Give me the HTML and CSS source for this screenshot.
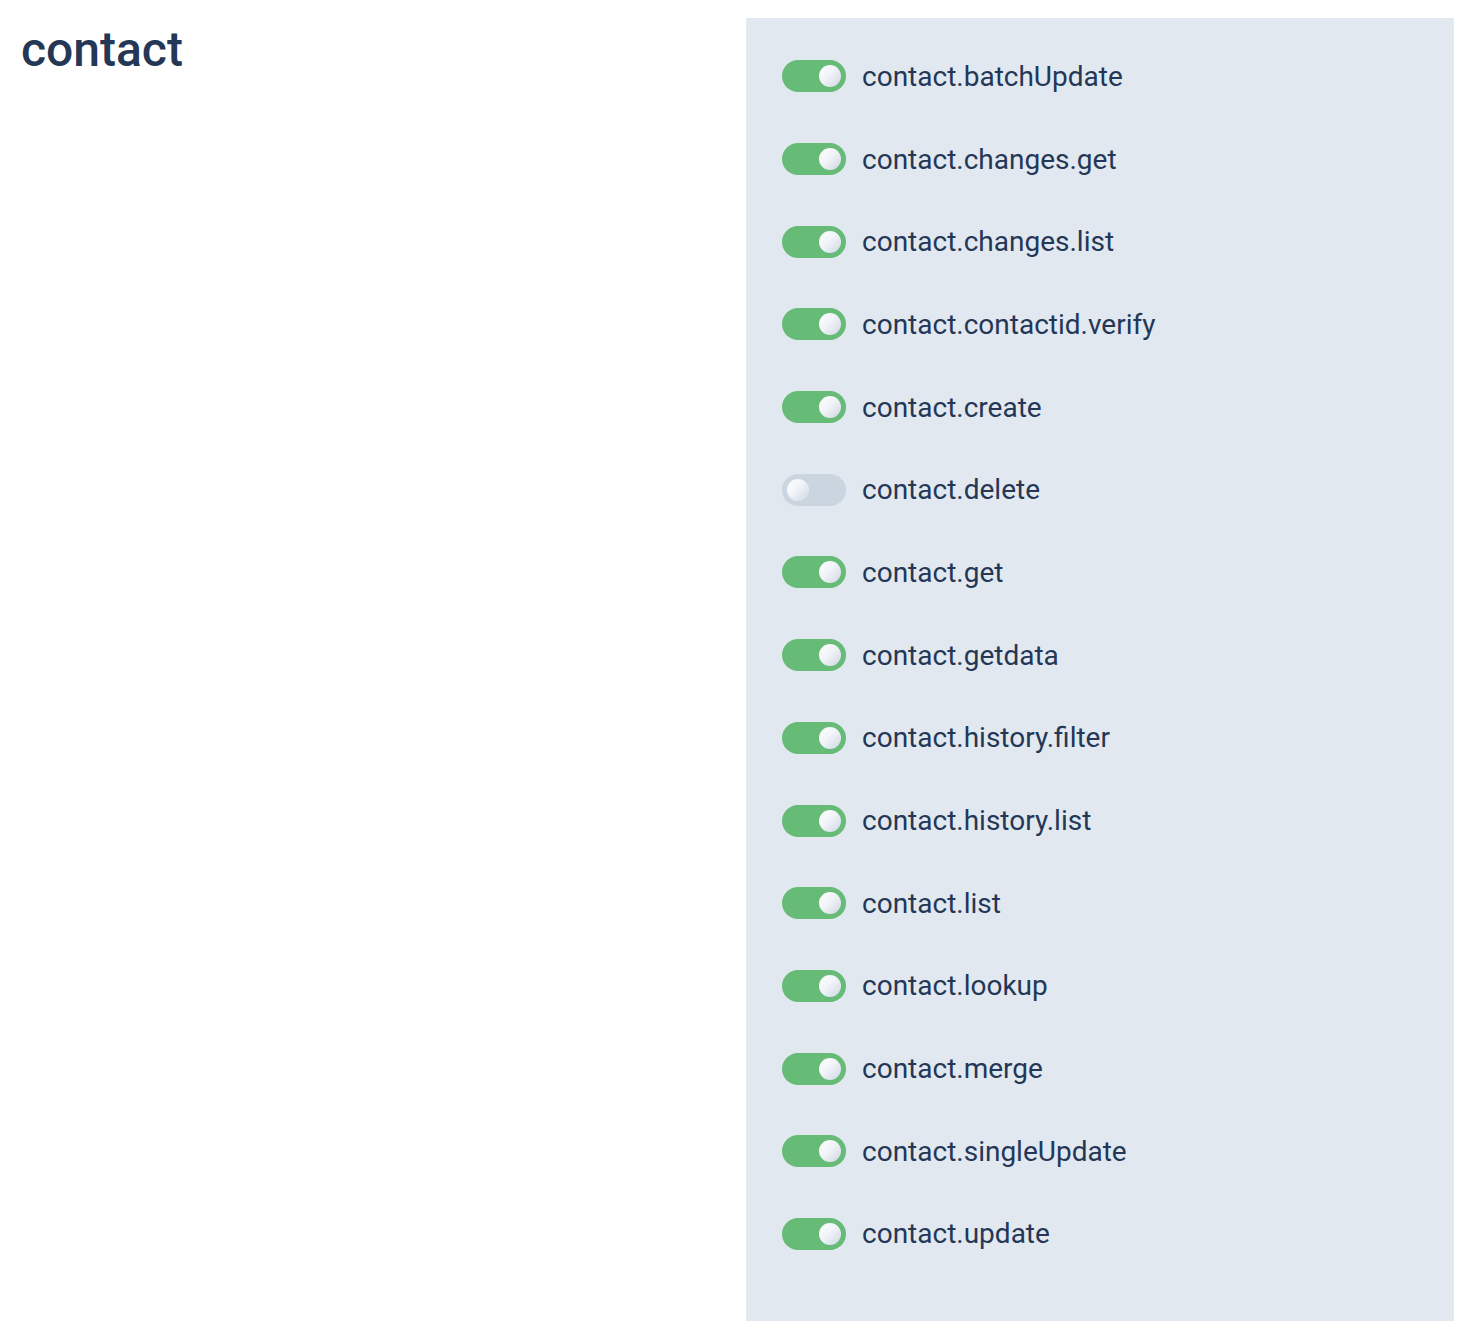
FILE: index.html
```html
<html>
<head>
    <meta http-equiv="Content-Type" content="text/html; charset=UTF-8" />
    <title>contact</title>
    <link rel="stylesheet" href="styles.css">
</head>
<body>

<div class="page">

    <div class="scope-name">
        <h1>contact</h1>
    </div>

    <!-- one switch per method of the scope -->
    <div class="methods">
        <label class="method"><span class="switch on"><span class="knob"></span></span>contact.batchUpdate</label>
        <label class="method"><span class="switch on"><span class="knob"></span></span>contact.changes.get</label>
        <label class="method"><span class="switch on"><span class="knob"></span></span>contact.changes.list</label>
        <label class="method"><span class="switch on"><span class="knob"></span></span>contact.contactid.verify</label>
        <label class="method"><span class="switch on"><span class="knob"></span></span>contact.create</label>
        <label class="method"><span class="switch"><span class="knob"></span></span>contact.delete</label>
        <label class="method"><span class="switch on"><span class="knob"></span></span>contact.get</label>
        <label class="method"><span class="switch on"><span class="knob"></span></span>contact.getdata</label>
        <label class="method"><span class="switch on"><span class="knob"></span></span>contact.history.filter</label>
        <label class="method"><span class="switch on"><span class="knob"></span></span>contact.history.list</label>
        <label class="method"><span class="switch on"><span class="knob"></span></span>contact.list</label>
        <label class="method"><span class="switch on"><span class="knob"></span></span>contact.lookup</label>
        <label class="method"><span class="switch on"><span class="knob"></span></span>contact.merge</label>
        <label class="method"><span class="switch on"><span class="knob"></span></span>contact.singleUpdate</label>
        <label class="method"><span class="switch on"><span class="knob"></span></span>contact.update</label>
    </div>

</div>

</body>
</html>
```

FILE: styles.css
```css
body {
    margin: 0;
    font-family: Roboto, "Liberation Sans", sans-serif;
    color: #243756;
    background: #fff;
}

.page {
    display: grid;
    grid-template-columns: 1fr 1fr;
    column-gap: 22px;
    padding: 18px 16px 12px 16px;
}

.scope-name h1 {
    margin: 0;
    padding-left: 5px;
    font-size: 48px;
    font-weight: 500;
    line-height: 64px;
}

.methods {
    background: #e2e8f0;
    padding: 17px 36px 46px 36px;
    display: grid;
    grid-auto-rows: 82.7px;
}

.method {
    display: flex;
    align-items: center;
    font-size: 28px;
}

/* toggle switch */
.switch {
    position: relative;
    width: 64px;
    height: 32px;
    border-radius: 16px;
    background: #cbd5e0;
    margin-right: 16px;
    flex-shrink: 0;
}
.switch.on {
    background: #66bb77;
}

.knob {
    position: absolute;
    top: 5px;
    left: 5px;
    width: 22px;
    height: 22px;
    border-radius: 50%;
    background: linear-gradient(135deg, #ffffff 0%, #f1f4f8 45%, #cfd7e3 100%);
}
.switch.on .knob {
    left: 37px;
}
```
